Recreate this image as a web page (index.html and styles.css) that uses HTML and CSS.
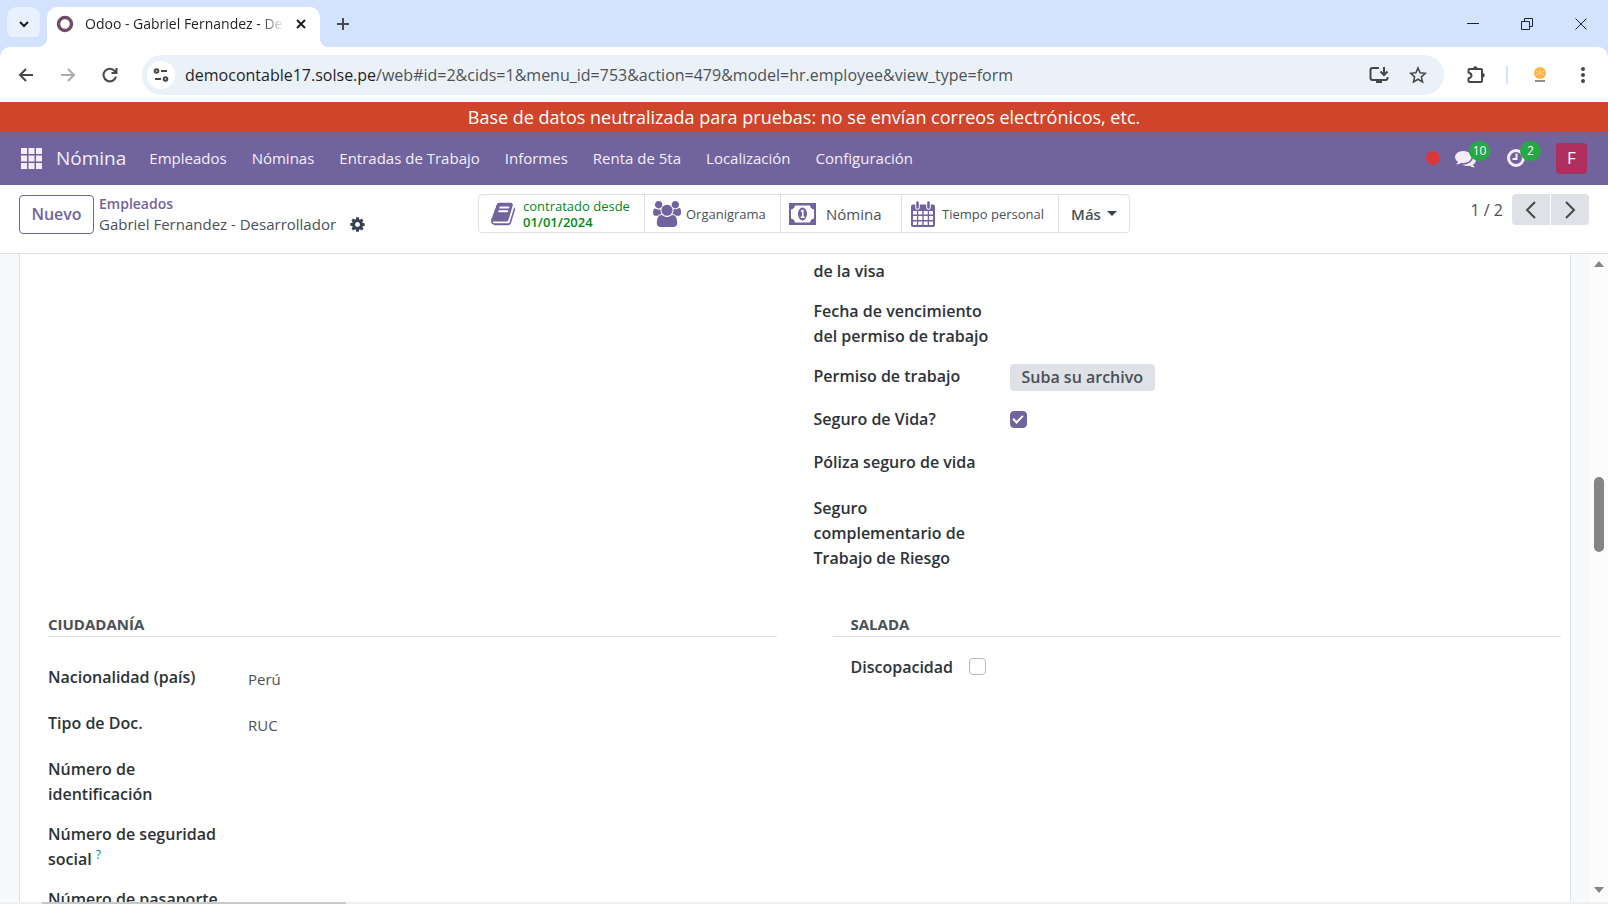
FILE: index.html
```html
<!DOCTYPE html>
<html lang="es">
<head>
<meta charset="utf-8">
<title>Odoo - Gabriel Fernandez - Desarrollador</title>
<link rel="stylesheet" href="styles.css">
</head>
<body>
<div class="window">
  <header class="tabstrip">
    <button class="tab-search" aria-label="Buscar pestañas"><svg width="16" height="16" viewBox="0 0 16 16" class="line dark"><path d="M4 6l4 4 4-4"/></svg></button>
    <div class="tab">
      <svg width="18" height="18" viewBox="0 0 18 18"><circle cx="9" cy="9" r="6.500" fill="none" stroke="#714b67" stroke-width="3.400"/></svg>
      <span class="tab-title">Odoo - Gabriel Fernandez - Desarrollador</span>
      <button class="icon-btn" aria-label="Cerrar pestaña"><svg width="12" height="12" viewBox="0 0 12 12" class="line dark"><path d="M2 2l8 8M10 2l-8 8"/></svg></button>
    </div>
    <button class="icon-btn new-tab" aria-label="Nueva pestaña"><svg width="14" height="14" viewBox="0 0 14 14" class="line"><path d="M7 1v12M1 7h12"/></svg></button>
    <div class="window-controls">
      <button class="icon-btn" aria-label="Minimizar"><svg width="14" height="14" viewBox="0 0 14 14" class="thin"><path d="M1 6.500h12"/></svg></button>
      <button class="icon-btn" aria-label="Restaurar"><svg width="14" height="14" viewBox="0 0 14 14" class="thin"><path d="M1.500 4.500h8v8h-8zM4.500 4V1.500h8v8H10"/></svg></button>
      <button class="icon-btn" aria-label="Cerrar"><svg width="14" height="14" viewBox="0 0 14 14" class="thin"><path d="M1.500 1.500l11 11M12.500 1.500l-11 11"/></svg></button>
    </div>
  </header>

  <div class="toolbar">
    <button class="icon-btn" aria-label="Atrás"><svg width="16" height="16" viewBox="0 0 16 16" class="line"><path d="M15 8H2M8 2L2 8l6 6"/></svg></button>
    <button class="icon-btn faded" aria-label="Adelante"><svg width="16" height="16" viewBox="0 0 16 16" class="line"><path d="M1 8h13M8 2l6 6-6 6"/></svg></button>
    <button class="icon-btn" aria-label="Recargar"><svg width="16" height="16" viewBox="0 0 16 16" class="line"><path d="M14 9.500A6.300 6.300 0 1 1 12.700 4L14 5.500M14.500 1v5h-5"/></svg></button>
    <div class="omnibox">
      <span class="site-info"><svg width="16" height="16" viewBox="0 0 16 16" class="line"><circle cx="3.500" cy="4" r="1.800"/><path d="M8 4h6M2 12h6"/><circle cx="12.500" cy="12" r="1.800"/></svg></span>
      <span class="url"><b>democontable17.solse.pe</b>/web#id=2&amp;cids=1&amp;menu_id=753&amp;action=479&amp;model=hr.employee&amp;view_type=form</span>
      <button class="icon-btn" aria-label="Instalar"><svg width="20" height="18" viewBox="0 0 20 18" class="line"><path d="M10 2H3.500Q1.500 2 1.500 4v8q0 2 2 2h13q2 0 2-2v-1M15 1v7M11.500 5.500L15 9l3.500-3.500"/><path d="M7 15.500h6" stroke-width="3"/></svg></button>
      <button class="icon-btn" aria-label="Marcador"><svg width="18" height="18" viewBox="0 0 18 18" class="line star"><path d="M9 2l2.100 4.800 5.200.500-3.900 3.500 1.100 5.100L9 13.200l-4.500 2.700 1.100-5.100L1.700 7.300l5.200-.500z"/></svg></button>
    </div>
    <div class="extensions">
      <button class="icon-btn" aria-label="Extensiones"><svg width="20" height="20" viewBox="0 0 20 20" class="line"><path d="M3.500 4H15q1 0 1 1v11q0 1-1 1H3.500q-1 0-1-1v-2.500Q5.500 12.500 5.500 10.500T2.500 7.500V5q0-1 1-1z"/><path d="M7 3.500a2.300 2.300 0 0 1 4.600 0zM16.500 8a2.300 2.300 0 0 1 0 4.600z" fill="#474747" stroke="none"/></svg></button>
      <span class="divider"></span>
      <button class="icon-btn profile" aria-label="Perfil"><svg width="16" height="18" viewBox="0 0 16 18"><circle cx="8" cy="7" r="6" fill="#ffb347"/><path d="M4 5l8 4M4 9l8-4M8 2v10" stroke="#ffcf80"/><path d="M3 15h10" stroke="#8d8f93" stroke-width="2"/></svg></button>
      <button class="icon-btn" aria-label="Menú"><svg width="6" height="18" viewBox="0 0 6 18" fill="#474747"><circle cx="3" cy="3" r="2"/><circle cx="3" cy="9" r="2"/><circle cx="3" cy="15" r="2"/></svg></button>
    </div>
  </div>

  <div class="banner">Base de datos neutralizada para pruebas: no se envían correos electrónicos, etc.</div>

  <nav class="navbar">
    <button class="icon-btn" aria-label="Aplicaciones"><svg width="21" height="21" viewBox="0 0 21 21" fill="#f5eefa"><path d="M0 0h6v6H0zM7.500 0h6v6h-6zM15 0h6v6h-6zM0 7.500h6v6H0zM7.500 7.500h6v6h-6zM15 7.500h6v6h-6zM0 15h6v6H0zM7.500 15h6v6h-6zM15 15h6v6h-6z"/></svg></button>
    <a class="brand" href="#">Nómina</a>
    <div class="menu">
      <a href="#">Empleados</a><a href="#">Nóminas</a><a href="#">Entradas de Trabajo</a><a href="#">Informes</a><a href="#">Renta de 5ta</a><a href="#">Localización</a><a href="#">Configuración</a>
    </div>
    <div class="systray">
      <span class="record"></span>
      <button class="icon-btn tray" aria-label="Mensajes"><svg width="21" height="21" viewBox="0 0 1792 1792" fill="#f2edf7"><path d="M1408 768q0 139-94 257t-256.500 186.500-353.500 68.500q-86 0-176-16-124 88-278 128-36 9-86 16h-3q-11 0-20.500-8t-11.500-21q-1-3-1-6.500t.5-6.500 2-6l2.500-5 3.500-5.500 4-5 4.500-5 4-4.500q5-6 23-25t26-29.500 22.500-29 25-38.500 20.500-44q-124-72-195-177t-71-224q0-139 94-257t256.500-186.500 353.500-68.500 353.500 68.500 256.500 186.500 94 257zm384 256q0 120-71 224.500t-195 176.500q10 24 20.500 44t25 38.500 22.500 29 26 29.500 23 25q1 1 4 4.500t4.500 5 4 5 3.500 5.500l2.500 5 2 6 .5 6.500-1 6.500q-3 14-13 22t-22 7q-50-7-86-16-154-40-278-128-90 16-176 16-271 0-472-132 58 4 88 4 161 0 309-45t264-129q125-92 192-212t67-254q0-77-23-152 129 71 204 178t75 230z"/></svg><span class="badge">10</span></button>
      <button class="icon-btn tray" aria-label="Actividades"><svg width="20" height="20" viewBox="0 0 20 20" fill="none" stroke="#f2edf7"><circle cx="10" cy="10" r="7.500" stroke-width="3"/><path d="M10.500 5.500v5.500H6.500" stroke-width="2"/></svg><span class="badge">2</span></button>
      <button class="avatar">F</button>
    </div>
  </nav>

  <div class="control-panel">
    <div class="crumbs">
      <button class="btn-new">Nuevo</button>
      <div class="crumb-text">
        <a href="#">Empleados</a>
        <div class="crumb-current">Gabriel Fernandez - Desarrollador
          <button class="icon-btn" aria-label="Acciones"><svg width="15" height="15" viewBox="96 128 1600 1536" fill="#374151"><path d="M1152 896q0-106-75-181t-181-75-181 75-75 181 75 181 181 75 181-75 75-181zm512-109v222q0 12-8 23t-20 13l-185 28q-19 54-39 91 35 50 107 138 10 12 10 25t-9 23q-27 37-99 108t-94 71q-12 0-26-9l-138-108q-44 23-91 38-16 136-29 186-7 28-36 28h-222q-14 0-24.500-8.500t-11.500-21.500l-28-184q-49-16-90-37l-141 107q-10 9-25 9-14 0-25-11-126-114-165-168-7-10-7-23 0-12 8-23 15-21 51-66.500t54-70.500q-27-50-41-99l-183-27q-13-2-21-12.500t-8-23.500v-222q0-12 8-23t19-13l186-28q14-46 39-92-40-57-107-138-10-12-10-24 0-10 9-23 26-36 98.500-107.500t94.500-71.500q13 0 26 10l138 107q44-23 91-38 16-136 29-186 7-28 36-28h222q14 0 24.500 8.500t11.500 21.500l28 184q49 16 90 37l142-107q9-9 24-9 13 0 25 10 129 119 165 170 7 8 7 22 0 12-8 23-15 21-51 66.500t-54 70.500q26 50 41 98l183 28q13 2 21 12.500t8 23.500z"/></svg></button>
        </div>
      </div>
    </div>

    <div class="stats">
      <button class="stat contract"><svg width="26" height="26" viewBox="0 0 1792 1792"><path d="M1639 478q40 57 18 129l-275 906q-19 64-76.500 107.500t-122.500 43.500h-923q-77 0-148.500-53.500t-99.500-131.500q-24-67-2-127 0-4 3-27t4-37q1-8-3-21.500t-3-19.500q2-11 8-21t16.500-23.500 16.500-23.500q23-38 45-91.500t30-91.500q3-10 .5-30t-.5-28q3-11 17-28t17-23q21-36 42-92t25-90q1-9-2.500-32t.5-28q4-13 22-30.500t22-22.500q19-26 42.500-84.500t27.500-96.500q1-8-3-25.500t-2-26.500q2-8 9-18t18-23 17-21q8-12 16.500-30.500t15-35 16-36 19.500-32 26.500-23.500 36-11.500 47.500 5.500l-1 3q38-9 51-9h761q74 0 114 56t18 130l-274 906q-36 119-71.500 153.500t-128.500 34.500h-869q-27 0-38 15-11 16-1 43 24 70 144 70h923q29 0 56-15.500t35-41.500l300-987q7-22 5-57 38 15 59 43zm-1064 2q-4 13 2 22.500t20 9.500h608q13 0 25.500-9.500t16.500-22.500l21-64q4-13-2-22.500t-20-9.500h-608q-13 0-25.500 9.500t-16.500 22.500zm-83 256q-4 13 2 22.500t20 9.500h608q13 0 25.500-9.500t16.500-22.500l21-64q4-13-2-22.500t-20-9.500h-608q-13 0-25.500 9.500t-16.500 22.500z"/></svg><span>contratado desde<br><b>01/01/2024</b></span></button>
      <button class="stat org"><svg width="28" height="26" viewBox="-64 0 1920 1792"><path d="M529 896q-162 5-265 128h-134q-82 0-138-40.500t-56-118.500q0-353 124-353 6 0 43.500 21t97.500 42.500 119 21.500q67 0 133-23-5 37-5 66 0 159 90 288zm1071 637q0 120-73 189.500t-194 69.500h-874q-121 0-194-69.500t-73-189.500q0-53 3.500-103.500t14-109 26.500-108.500 43-97.500 62-81 85.500-53.500 111.500-20q10 0 43 21.500t73 48 107 48 135 21.500 135-21.500 107-48 73-48 43-21.500q61 0 111.500 20t85.500 53.500 62 81 43 97.500 26.500 108.500 14 109 3.500 103.500zm-1024-1277q0 106-75 181t-181 75-181-75-75-181 75-181 181-75 181 75 75 181zm704 384q0 159-112.500 271.500t-271.500 112.500-271.500-112.500-112.500-271.500 112.500-271.500 271.500-112.500 271.500 112.500 112.500 271.500zm576 225q0 78-56 118.500t-138 40.500h-134q-103-123-265-128 90-129 90-288 0-29-5-66 66 23 133 23 59 0 119-21.500t97.500-42.500 43.500-21q124 0 124 353zm-128-609q0 106-75 181t-181 75-181-75-75-181 75-181 181-75 181 75 75 181z"/></svg><span>Organigrama</span></button>
      <button class="stat pay"><svg width="27" height="22" viewBox="0 0 27 22"><path fill-rule="evenodd" d="M0 0h27v22H0zM6 2.500Q5.500 6 2 6.500v9q3.500.500 4 4h15q.500-3.500 4-4v-9Q21.500 6 21 2.500z"/><ellipse cx="13.500" cy="11" rx="4.500" ry="6.500"/><path d="M12 8.500l1.800-1v6.500M11.700 14.300h4" fill="none" stroke="#fff" stroke-width="1.500"/></svg><span>Nómina</span></button>
      <button class="stat leave"><svg width="24" height="26" viewBox="0 0 24 26"><path fill-rule="evenodd" d="M2 3.500h20q2 0 2 2V24q0 2-2 2H2q-2 0-2-2V5.500q0-2 2-2zM2 10v3.500h4V10zM7.300 10v3.500h4V10zM12.700 10v3.500h4V10zM18 10v3.500h4V10zM2 15v4h4v-4zM7.300 15v4h4v-4zM12.700 15v4h4v-4zM18 15v4h4v-4zM2 20.500V24h4v-3.500zM7.300 20.500V24h4v-3.500zM12.700 20.500V24h4v-3.500zM18 20.500V24h4v-3.500z"/><path d="M6.500 1.500v5M17.500 1.500v5" stroke="#fff" stroke-width="4.500" stroke-linecap="round"/><path d="M6.500 1.500v5M17.500 1.500v5" stroke="#71639e" stroke-width="2.600" stroke-linecap="round"/></svg><span>Tiempo personal</span></button>
      <button class="stat more"><span>Más</span><svg width="10" height="5" viewBox="0 0 10 5" class="caret"><path d="M0 0h10L5 5z"/></svg></button>
    </div>

    <div class="pager">
      <span>1 / 2</span>
      <div class="pager-buttons">
        <button aria-label="Anterior"><svg width="12" height="18" viewBox="0 0 12 18" class="line"><path d="M10 1L2 9l8 8"/></svg></button>
        <button aria-label="Siguiente"><svg width="12" height="18" viewBox="0 0 12 18" class="line"><path d="M2 1l8 8-8 8"/></svg></button>
      </div>
    </div>
  </div>

  <main class="content">
    <div class="sheet">
      <div class="permits">
        <div class="permit-fields">
          <div class="field"><span class="label">de la visa</span></div>
          <div class="field"><span class="label">Fecha de vencimiento del permiso de trabajo</span></div>
          <div class="field with-control"><span class="label">Permiso de trabajo</span><button class="upload">Suba su archivo</button></div>
          <div class="field with-control"><label class="label" for="life">Seguro de Vida?</label><input class="check" type="checkbox" id="life" checked></div>
          <div class="field with-value"><span class="label">Póliza seguro de vida</span></div>
          <div class="field"><span class="label">Seguro complementario de Trabajo de Riesgo</span></div>
        </div>
      </div>
      <div class="groups">
        <section>
          <h2>Ciudadanía</h2>
          <div class="fields">
            <div class="field with-value"><span class="label">Nacionalidad (país)</span><span class="value">Perú</span></div>
            <div class="field with-value"><span class="label">Tipo de Doc.</span><span class="value">RUC</span></div>
            <div class="field"><span class="label">Número de identificación</span></div>
            <div class="field"><span class="label">Número de seguridad social <sup>?</sup></span></div>
            <div class="field"><span class="label">Número de pasaporte</span></div>
          </div>
        </section>
        <section class="health">
          <h2>Salada</h2>
          <div class="inline-field"><label for="disability">Discopacidad</label><input class="check" type="checkbox" id="disability"></div>
        </section>
      </div>
    </div>
    <div class="scrollbar" aria-hidden="true">
      <svg width="10" height="6" viewBox="0 0 10 6"><path d="M0 6h10L5 0z"/></svg>
      <div class="track"><div class="thumb"></div></div>
      <svg width="10" height="6" viewBox="0 0 10 6"><path d="M0 0h10L5 6z"/></svg>
    </div>
  </main>
  <div class="status-line"><span></span></div>
</div>
</body>
</html>
```

FILE: styles.css
```css
* { box-sizing: border-box; }
body {
  margin: 0;
  font: 15px/20px "Open Sans", "Noto Sans", sans-serif;
  color: #4b5058;
}
button { font: inherit; color: inherit; cursor: pointer; }
a { color: inherit; text-decoration: none; }
svg { display: block; flex: none; }
.window { display: flex; flex-direction: column; height: 100vh; overflow: hidden; background: #fff; }
.icon-btn { display: flex; padding: 0; border: 0; background: none; }
.line { fill: none; stroke: #474747; stroke-width: 2; }
.dark { stroke: #1f1f1f; }
.thin { fill: none; stroke: #1f2430; stroke-width: 1; }
.faded { opacity: 0.45; }

/* Browser tabs */
.tabstrip { display: flex; align-items: center; flex: none; height: 47px; padding-left: 7px; background: #d3e3fd; }
.tab-search { display: grid; place-items: center; width: 33px; height: 33px; padding: 0; border: 0; border-radius: 10px; background: #e9f1fe; }
.tab { position: relative; z-index: 1; display: flex; align-items: center; align-self: flex-end; gap: 11px; width: 273px; height: 40px; margin-left: 7px; padding: 0 13px 7px 9px; border-radius: 10px 10px 0 0; background: #fff; }
.tab::before, .tab::after { content: ""; position: absolute; bottom: 0; width: 10px; height: 10px; }
.tab::before { right: 100%; background: radial-gradient(circle at 0 0, #d3e3fd 10px, #fff 11px); }
.tab::after { left: 100%; background: radial-gradient(circle at 100% 0, #d3e3fd 10px, #fff 11px); }
.tab-title { flex: 1; overflow: hidden; white-space: nowrap; font-size: 14px; color: #1f1f1f; mask-image: linear-gradient(to right, #000 88%, transparent); }
.new-tab { margin-left: 16px; }
.window-controls { display: flex; gap: 40px; margin-left: auto; padding-right: 20px; }

/* Address bar */
.toolbar { display: flex; align-items: center; flex: none; gap: 26px; height: 55px; padding: 0 22px 0 18px; border-radius: 10px 10px 0 0; background: #fff; box-shadow: 0 -10px 0 #d3e3fd; }
.toolbar .omnibox { display: flex; align-items: center; flex: 1; gap: 20px; height: 40px; margin-left: -2px; padding: 0 17px 0 5px; border-radius: 20px; background: #ebf1f9; }
.site-info { display: grid; place-items: center; width: 28px; height: 28px; border-radius: 50%; background: #fff; }
.url { flex: 1; margin-left: -10px; font-size: 16px; color: #4d5156; white-space: nowrap; overflow: hidden; }
.url b { font-weight: 400; color: #1f1f1f; }
.star { stroke-width: 1.6; }
.extensions { display: flex; align-items: center; gap: 20px; margin-left: -4px; }
.divider { width: 2px; height: 18px; background: #d3e3fd; }
.profile { margin: 0 12px 0 4px; }

/* Application bars */
.banner { flex: none; height: 29px; line-height: 30px; background: #d0442c; color: #fff; font-size: 18px; text-align: center; }
.navbar { display: flex; align-items: center; flex: none; height: 54px; padding: 0 21px; background: #71639e; color: #f3eff8; }
.brand { margin-left: 14px; font-size: 19px; }
.menu { display: flex; gap: 25px; margin-left: 23px; font-size: 15px; }
.systray { display: flex; align-items: center; gap: 30px; margin-left: auto; }
.record { width: 14px; height: 14px; margin-right: -15px; border-radius: 50%; background: #d9373a; }
.tray { position: relative; }
.badge { position: absolute; left: 14px; top: -7px; min-width: 21px; padding: 0 3px; border-radius: 10px; background: #28a745; color: #fff; font-size: 12px; line-height: 20px; }
.avatar { width: 31px; height: 31px; padding: 0; border: 0; border-radius: 4px; background: #b02e5e; color: #fff; font-size: 17px; }

/* Control panel */
.control-panel { display: grid; grid-template-columns: 1fr auto 1fr; align-items: start; flex: none; height: 69px; padding: 9px 19px; border-bottom: 1px solid #dee2e6; }
.crumbs { display: flex; align-items: center; gap: 5px; }
.btn-new { width: 75px; height: 39px; padding: 0; border: 1px solid #71639e; border-radius: 4px; background: #fff; color: #71639e; font-size: 16px; font-weight: 600; }
.crumb-text { white-space: nowrap; }
.crumb-text a { display: block; color: #71639e; font-size: 14px; font-weight: 600; }
.crumb-current { display: flex; align-items: center; gap: 14px; }
.stats { display: flex; height: 39px; border: 1px solid #dee2e6; border-radius: 4px; }
.stat { display: flex; align-items: center; padding: 0; border: 0; background: none; white-space: nowrap; }
.stat + .stat { border-left: 1px solid #dee2e6; }
.stat svg { fill: #71639e; }
.contract { gap: 6px; width: 165px; padding-left: 12px; color: #008818; font-size: 13px; line-height: 16px; text-align: left; }
.contract b { font-weight: 600; }
.org { gap: 5px; width: 136px; padding-left: 8px; font-size: 13px; }
.pay { gap: 10px; width: 121px; padding-left: 8px; }
.leave { gap: 7px; width: 157px; padding-left: 9px; font-size: 13px; }
.more { justify-content: center; gap: 6px; width: 71px; font-weight: 600; }
.stat .caret { fill: #374151; }
.pager { display: flex; align-items: center; justify-content: flex-end; gap: 9px; font-size: 16px; }
.pager-buttons { display: flex; gap: 1px; }
.pager-buttons button { display: grid; place-items: center; width: 38px; height: 31px; padding: 0; border: 0; background: #dee2e6; }
.pager-buttons button:first-child { border-radius: 4px 0 0 4px; }
.pager-buttons button:last-child { border-radius: 0 4px 4px 0; }

/* Form */
.content { display: flex; flex: 1; min-height: 0; overflow: hidden; background: #f8f9fa; }
.sheet { flex: 1; margin: 0 19px; padding: 5px 9px 0 28px; border: solid #dee2e6; border-width: 0 1px; background: #fff; }
.permits { display: grid; grid-template-columns: 1fr 1fr; gap: 18px; }
.permit-fields { grid-column: 2; }
.field { display: grid; grid-template-columns: 180px 1fr; column-gap: 16px; min-height: 25px; margin-bottom: 15px; line-height: 25px; }
.field .label { color: #2d3238; font-size: 16px; font-weight: 600; }
.with-control { min-height: 28px; }
.with-value { min-height: 31px; }
.upload { justify-self: start; height: 27px; padding: 0 12px; border: 0; border-radius: 4px; background: #dee2e6; color: #495057; font-size: 16px; font-weight: 600; }
.check { appearance: none; display: grid; place-items: center; width: 17px; height: 17px; margin: 4px 0; border: 1px solid #b5b9be; border-radius: 4px; background: #fff; }
.check:checked { border-color: #71639e; background: #71639e; }
.check:checked::after { content: ""; width: 8px; height: 4px; margin-bottom: 3px; border: solid #fff; border-width: 0 0 2px 2px; rotate: -45deg; }
.value { padding-top: 2px; }
.groups { display: grid; grid-template-columns: 1fr 1fr; gap: 56px; margin-top: 26px; }
h2 { margin: 0; border-bottom: 1px solid #dee2e6; color: #495057; font-size: 15px; line-height: 24px; font-weight: 700; text-transform: uppercase; }
.fields { padding-top: 28px; }
.fields .field { grid-template-columns: 180px 1fr; column-gap: 20px; }
sup { color: #017e84; font-size: 12px; line-height: 0; font-weight: 400; vertical-align: 6px; }
.health h2 { padding-left: 18px; }
.inline-field { display: flex; align-items: center; gap: 16px; padding: 17px 0 0 18px; color: #2d3238; font-size: 16px; font-weight: 600; }
.scrollbar { display: flex; flex-direction: column; align-items: center; width: 18px; padding: 7px 0 9px; background: #fcfcfc; fill: #858585; }
.track { flex: 1; width: 10px; padding-top: 210px; }
.thumb { height: 75px; border-radius: 5px; background: #858585; }
.status-line { flex: none; height: 2px; padding-left: 42px; background: #eff0f1; }
.status-line span { display: block; width: 304px; height: 2px; background: #c6c8ca; }
```
